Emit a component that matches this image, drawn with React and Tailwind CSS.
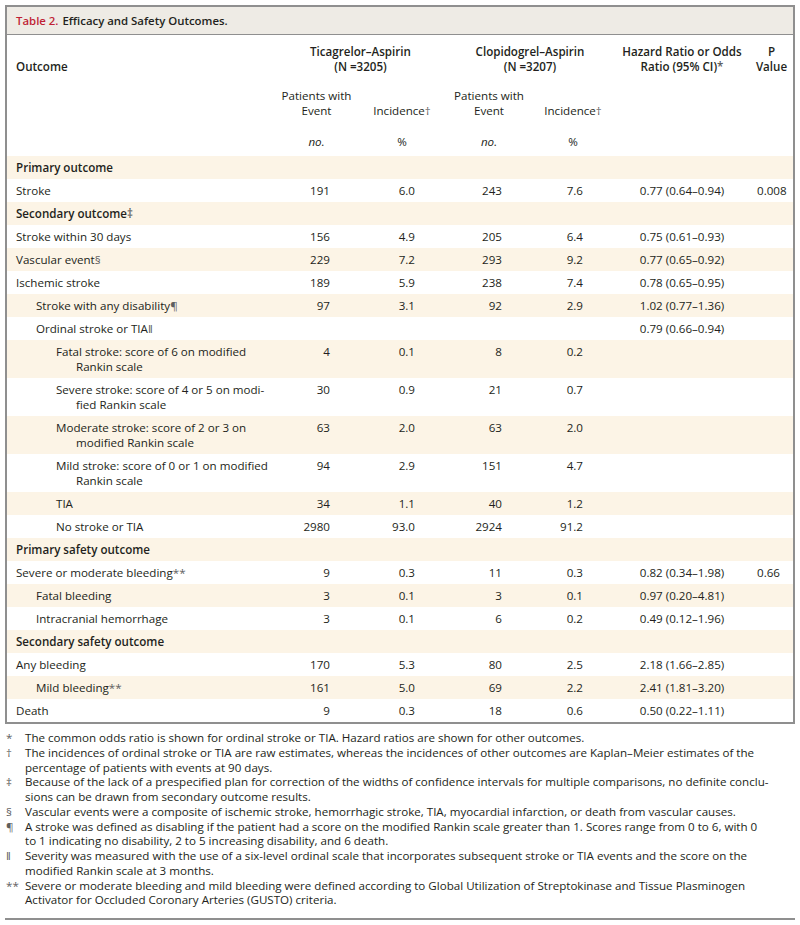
import React from 'react';

const M = ({ children }) => <span className="text-[#5f5f5f]">{children}</span>;

const rows = [
  { label: 'Primary outcome', head: true },
  { label: 'Stroke', v: ['191', '6.0', '243', '7.6', '0.77 (0.64–0.94)', '0.008'] },
  { label: 'Secondary outcome', mark: '‡', head: true },
  { label: 'Stroke within 30 days', v: ['156', '4.9', '205', '6.4', '0.75 (0.61–0.93)'] },
  { label: 'Vascular event', mark: '§', v: ['229', '7.2', '293', '9.2', '0.77 (0.65–0.92)'] },
  { label: 'Ischemic stroke', v: ['189', '5.9', '238', '7.4', '0.78 (0.65–0.95)'] },
  { label: 'Stroke with any disability', mark: '¶', level: 1, v: ['97', '3.1', '92', '2.9', '1.02 (0.77–1.36)'] },
  { label: 'Ordinal stroke or TIA', mark: '‖', level: 1, v: ['', '', '', '', '0.79 (0.66–0.94)'] },
  { label: 'Fatal stroke: score of 6 on modified', cont: 'Rankin scale', level: 2, v: ['4', '0.1', '8', '0.2'] },
  { label: 'Severe stroke: score of 4 or 5 on modi-', cont: 'fied Rankin scale', level: 2, v: ['30', '0.9', '21', '0.7'] },
  { label: 'Moderate stroke: score of 2 or 3 on', cont: 'modified Rankin scale', level: 2, v: ['63', '2.0', '63', '2.0'] },
  { label: 'Mild stroke: score of 0 or 1 on modified', cont: 'Rankin scale', level: 2, v: ['94', '2.9', '151', '4.7'] },
  { label: 'TIA', level: 2, v: ['34', '1.1', '40', '1.2'] },
  { label: 'No stroke or TIA', level: 2, v: ['2980', '93.0', '2924', '91.2'] },
  { label: 'Primary safety outcome', head: true },
  { label: 'Severe or moderate bleeding', mark: '**', v: ['9', '0.3', '11', '0.3', '0.82 (0.34–1.98)', '0.66'] },
  { label: 'Fatal bleeding', level: 1, v: ['3', '0.1', '3', '0.1', '0.97 (0.20–4.81)'] },
  { label: 'Intracranial hemorrhage', level: 1, v: ['3', '0.1', '6', '0.2', '0.49 (0.12–1.96)'] },
  { label: 'Secondary safety outcome', head: true },
  { label: 'Any bleeding', v: ['170', '5.3', '80', '2.5', '2.18 (1.66–2.85)'] },
  { label: 'Mild bleeding', mark: '**', level: 1, v: ['161', '5.0', '69', '2.2', '2.41 (1.81–3.20)'] },
  { label: 'Death', v: ['9', '0.3', '18', '0.6', '0.50 (0.22–1.11)'] },
];

const notes = [
  ['*', ['The common odds ratio is shown for ordinal stroke or TIA. Hazard ratios are shown for other outcomes.']],
  ['†', ['The incidences of ordinal stroke or TIA are raw estimates, whereas the incidences of other outcomes are Kaplan–Meier estimates of the', 'percentage of patients with events at 90 days.']],
  ['‡', ['Because of the lack of a prespecified plan for correction of the widths of confidence intervals for multiple comparisons, no definite conclu-', 'sions can be drawn from secondary outcome results.']],
  ['§', ['Vascular events were a composite of ischemic stroke, hemorrhagic stroke, TIA, myocardial infarction, or death from vascular causes.']],
  ['¶', ['A stroke was defined as disabling if the patient had a score on the modified Rankin scale greater than 1. Scores range from 0 to 6, with 0', 'to 1 indicating no disability, 2 to 5 increasing disability, and 6 death.']],
  ['‖', ['Severity was measured with the use of a six-level ordinal scale that incorporates subsequent stroke or TIA events and the score on the', 'modified Rankin scale at 3 months.']],
  ['**', ['Severe or moderate bleeding and mild bleeding were defined according to Global Utilization of Streptokinase and Tissue Plasminogen', 'Activator for Occluded Coronary Arteries (GUSTO) criteria.']],
];

const cols = 'grid grid-cols-[268px_83px_88px_86px_82px_136px_43px]';
const indent = ['pl-[9px]', 'pl-[29px]', 'pl-[49px]'];
const contIndent = ['pl-[29px]', 'pl-[49px]', 'pl-[69px]'];

function Row({ row, idx }) {
  const level = row.level || 0;
  const v = row.v || [];
  return (
    <div className={`${cols} py-[4px] ${idx % 2 === 0 ? 'bg-[#fcf4e6]' : 'bg-white'}`}>
      <div className={row.head ? 'font-semibold' : ''}>
        <div className={indent[level]}>
          {row.label}
          {row.mark && <M>{row.mark}</M>}
        </div>
        {row.cont && <div className={contIndent[level]}>{row.cont}</div>}
      </div>
      <div className="text-right pr-[28px]">{v[0]}</div>
      <div className="text-right pr-[31px]">{v[1]}</div>
      <div className="text-right pr-[30px]">{v[2]}</div>
      <div className="text-right pr-[31px]">{v[3]}</div>
      <div className="text-center">{v[4]}</div>
      <div className="pl-[7px]">{v[5]}</div>
    </div>
  );
}

export default function App() {
  return (
    <div className="w-[800px] h-[925px] bg-white px-[5px] pt-[5px] font-['Open_Sans',sans-serif] text-[11.6px] leading-[15px] text-[#231f20]">
      <div className="border-2 border-[#8f8f8f]">
        {/* Title band */}
        <div className="h-[28px] bg-[#eeebe5] border-b border-[#8f8f8f] pl-[9px] flex items-center text-[11.4px] font-semibold">
          <span className="text-[#c01f35]">Table 2.</span>
          <span className="ml-[4px]">Efficacy and Safety Outcomes.</span>
        </div>

        {/* Column headers */}
        <div className="pt-[9px] pb-[7px]">
          <div className={`${cols} items-end font-semibold`}>
            <div className="pl-[9px]">Outcome</div>
            <div className="col-span-2 text-center">Ticagrelor–Aspirin<br />(N =3205)</div>
            <div className="col-span-2 text-center">Clopidogrel–Aspirin<br />(N =3207)</div>
            <div className="text-center">Hazard Ratio or Odds<br />Ratio (95% CI)<M>*</M></div>
            <div className="text-center">P<br />Value</div>
          </div>
          <div className={`${cols} items-end mt-[14px]`}>
            <div />
            <div className="text-center">Patients with<br />Event</div>
            <div className="text-center">Incidence<M>†</M></div>
            <div className="text-center">Patients with<br />Event</div>
            <div className="text-center">Incidence<M>†</M></div>
          </div>
          <div className={`${cols} mt-[16px]`}>
            <div />
            <div className="text-center italic">no.</div>
            <div className="text-center">%</div>
            <div className="text-center italic">no.</div>
            <div className="text-center">%</div>
          </div>
        </div>

        {/* Body */}
        {rows.map((r, i) => <Row key={i} row={r} idx={i} />)}
      </div>

      {/* Footnotes */}
      <div className="mt-[7px] leading-[14.75px]">
        {notes.map(([mark, lines], i) => (
          <div key={i} className="flex">
            <div className="w-[20px] shrink-0 pl-[1px] text-[#5f5f5f]">{mark}</div>
            <div>
              {lines.map((l, j) => (
                <div key={j} className="whitespace-nowrap">{l}</div>
              ))}
            </div>
          </div>
        ))}
      </div>
      <div className="mt-[10px] h-[2px] bg-[#8f8f8f]" />
    </div>
  );
}
